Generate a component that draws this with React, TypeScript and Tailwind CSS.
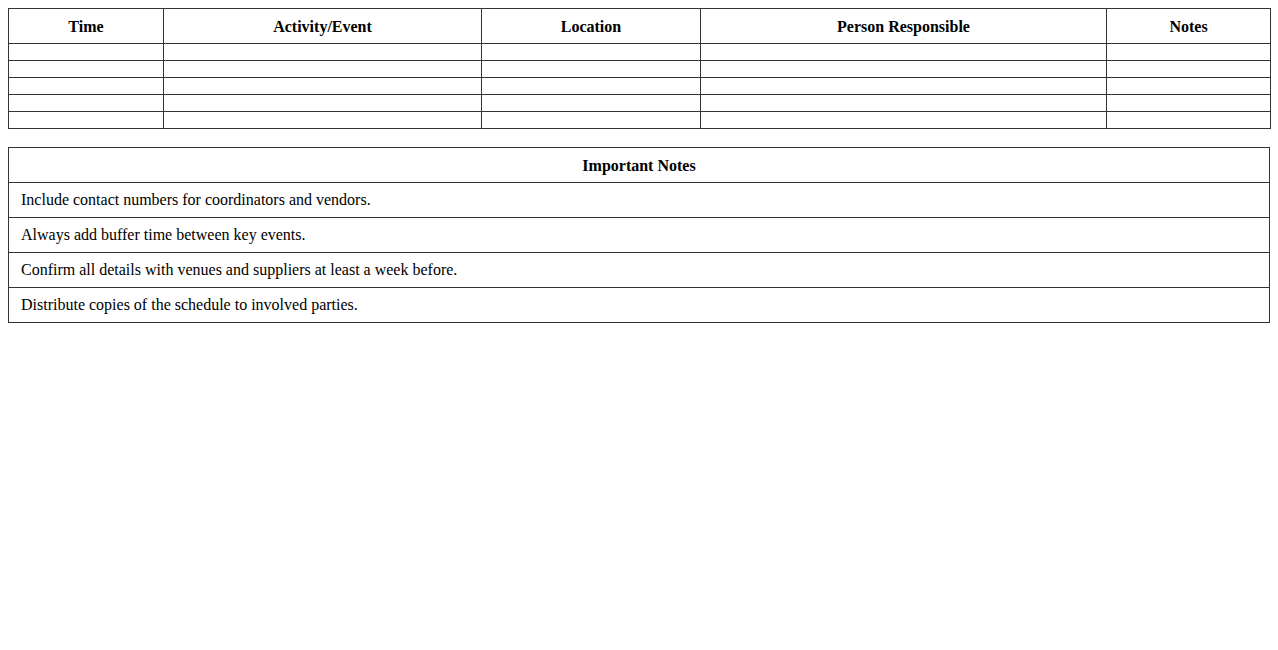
const columns = [
  { label: "Time", width: "w-[155px]" },
  { label: "Activity/Event", width: "w-[318px]" },
  { label: "Location", width: "w-[219px]" },
  { label: "Person Responsible", width: "w-[406px]" },
  { label: "Notes", width: "w-[164px]" },
];

const notes = [
  "Include contact numbers for coordinators and vendors.",
  "Always add buffer time between key events.",
  "Confirm all details with venues and suppliers at least a week before.",
  "Distribute copies of the schedule to involved parties.",
];

const emptyRows = [0, 1, 2, 3, 4];

export default function App() {
  return (
    <div className="min-h-screen bg-white p-2 font-['Liberation_Serif','Times_New_Roman',serif] text-base text-black">
      {/* Schedule */}
      <table className="w-full table-fixed border-collapse">
        <colgroup>
          {columns.map((c) => (
            <col key={c.label} className={c.width} />
          ))}
        </colgroup>
        <thead>
          <tr>
            {columns.map((c) => (
              <th
                key={c.label}
                className="border border-[#333] px-2 pt-[9px] pb-[7px] text-center font-bold leading-[18px]"
              >
                {c.label}
              </th>
            ))}
          </tr>
        </thead>
        <tbody>
          {emptyRows.map((r) => (
            <tr key={r}>
              {columns.map((c) => (
                <td key={c.label} className="h-[17px] border border-[#333] p-2" />
              ))}
            </tr>
          ))}
        </tbody>
      </table>

      {/* Important Notes */}
      <table className="mt-[18px] w-full border-collapse">
        <thead>
          <tr>
            <th className="border border-[#333] px-3 pt-[9px] pb-[7px] text-center font-bold leading-[18px]">
              Important Notes
            </th>
          </tr>
        </thead>
        <tbody>
          {notes.map((n) => (
            <tr key={n}>
              <td className="border border-[#333] px-3 py-2 text-left leading-[18px]">{n}</td>
            </tr>
          ))}
        </tbody>
      </table>
    </div>
  );
}
